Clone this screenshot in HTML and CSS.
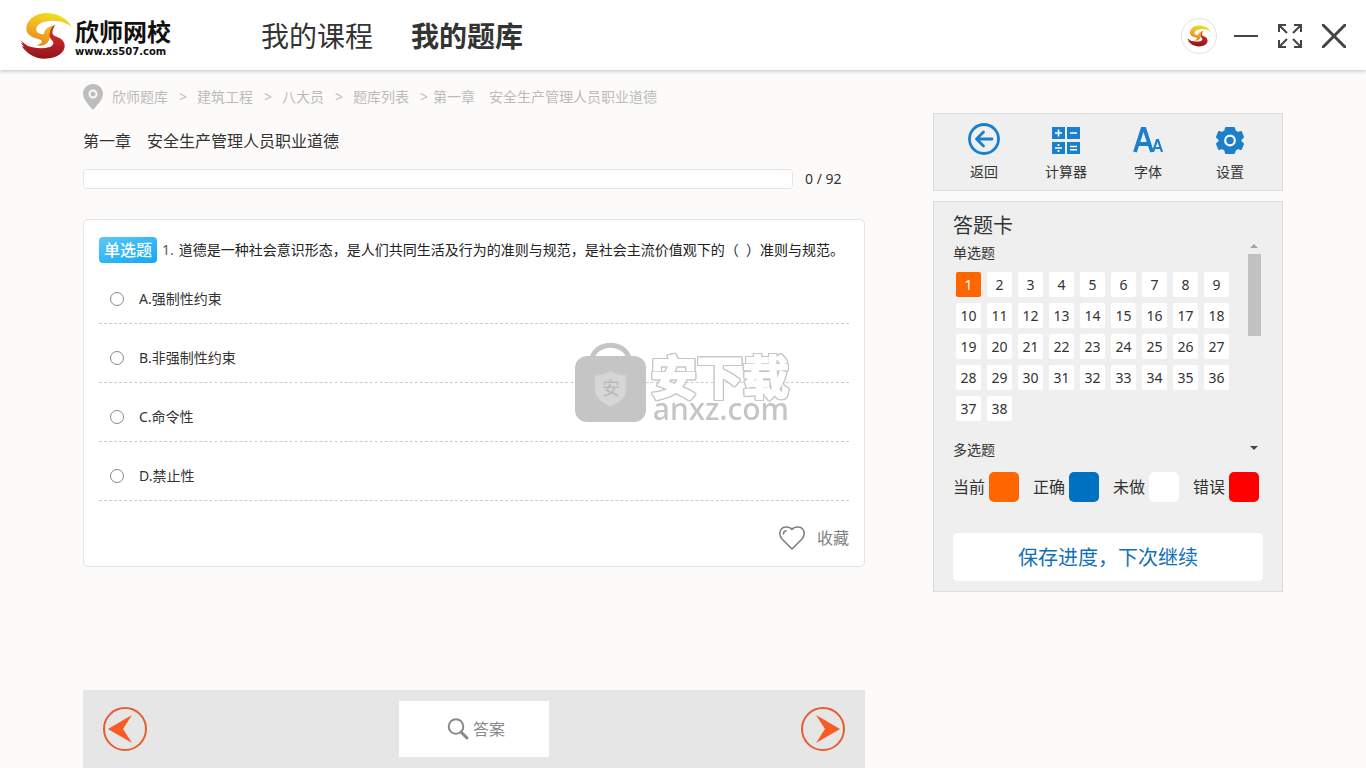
FILE: index.html
```html
<!DOCTYPE html>
<html lang="zh-CN">
<head>
<meta charset="utf-8">
<meta name="viewport" content="width=device-width, initial-scale=1">
<title>欣师网校 - 我的题库</title>
<link rel="stylesheet" href="styles.css">
</head>
<body>
<svg class="defs" width="0" height="0" aria-hidden="true">
  <defs>
    <linearGradient id="gold" x1="0.7" y1="0" x2="0.3" y2="1">
      <stop offset="0" stop-color="#efe31c"/>
      <stop offset="0.45" stop-color="#f2b824"/>
      <stop offset="1" stop-color="#e8861f"/>
    </linearGradient>
    <linearGradient id="crimson" x1="0" y1="0" x2="0" y2="1">
      <stop offset="0" stop-color="#c8451f"/>
      <stop offset="0.5" stop-color="#c0212a"/>
      <stop offset="1" stop-color="#8e1519"/>
    </linearGradient>
    <symbol id="swoosh" viewBox="0 0 156 144">
      <path fill="url(#crimson)" d="M105 40C93 42 86 50 86 62C85 74 92 80 98 87C103 95 98 103 86 106C66 111 40 108 22 101L1 85L9 95L2 92L12 104L5 102C20 124 42 140 74 140C112 139 136 122 134 99C132 82 116 76 104 72C95 68 95 58 105 40Z"/>
      <path fill="url(#gold)" d="M154 44C140 14 104 2 74 3C40 6 18 28 19 52C20 66 32 74 44 78C60 82 70 86 64 92C60 97 54 99 47 99C68 105 84 97 88 82C90 70 86 58 98 43C84 44 74 52 72 66C62 68 50 63 49 54C48 40 62 29 86 27C112 24 136 30 154 44Z"/>
    </symbol>
  </defs>
</svg>

<header class="topbar">
  <a class="brand" href="#">
    <svg class="brand-mark" aria-hidden="true"><use href="#swoosh"/></svg>
    <span class="brand-text">
      <span class="brand-name">欣师网校</span>
      <span class="brand-url">www.xs507.com</span>
    </span>
  </a>
  <nav class="main-nav">
    <a href="#">我的课程</a>
    <a class="active" href="#">我的题库</a>
  </nav>
  <div class="window-tools">
    <button class="avatar" type="button" aria-label="用户"><svg width="24" height="22"><use href="#swoosh"/></svg></button>
    <button type="button" aria-label="最小化"><svg width="24" height="24" viewBox="0 0 24 24"><path d="M0 12h24"/></svg></button>
    <button type="button" aria-label="全屏"><svg width="24" height="24" viewBox="0 0 24 24"><path d="M1 8V1h7M1 1l8 8M16 1h7v7M23 1l-8 8M1 16v7h7M1 23l8-8M23 16v7h-7M23 23l-8-8"/></svg></button>
    <button type="button" aria-label="关闭"><svg width="24" height="24" viewBox="0 0 24 24"><path class="thick" d="M1 1l22 22M23 1L1 23"/></svg></button>
  </div>
</header>

<div class="page">
  <main class="content">
    <nav class="breadcrumb">
      <svg width="20" height="26" viewBox="0 0 20 26" aria-hidden="true"><path fill="#bdbdbd" fill-rule="evenodd" d="M10 0C4.300 0 0 4.300 0 9.700C0 16 7 22 10 26C13 22 20 16 20 9.700C20 4.300 15.700 0 10 0ZM10 5.500a4.500 4.500 0 1 1 0 9a4.500 4.500 0 0 1 0-9ZM10 7.500a2.500 2.500 0 1 0 0 5a2.500 2.500 0 0 0 0-5Z"/></svg>
      <a href="#">欣师题库</a><span class="sep">&gt;</span><a href="#">建筑工程</a><span class="sep">&gt;</span><a href="#">八大员</a><span class="sep">&gt;</span><a href="#">题库列表</a><span class="sep last">&gt;</span><a href="#">第一章　安全生产管理人员职业道德</a>
    </nav>
    <h1 class="chapter">第一章　安全生产管理人员职业道德</h1>
    <div class="progress-row">
      <progress id="done" value="0" max="92"></progress>
      <label for="done">0 / 92</label>
    </div>

    <section class="question">
      <p class="stem"><span class="tag">单选题</span><span class="num">1.</span><span>道德是一种社会意识形态，是人们共同生活及行为的准则与规范，是社会主流价值观下的（&nbsp; ）准则与规范。</span></p>
      <label class="option"><input type="radio" name="answer" value="A"><span>A.强制性约束</span></label>
      <label class="option"><input type="radio" name="answer" value="B"><span>B.非强制性约束</span></label>
      <label class="option"><input type="radio" name="answer" value="C"><span>C.命令性</span></label>
      <label class="option"><input type="radio" name="answer" value="D"><span>D.禁止性</span></label>
      <button class="favorite" type="button">
        <svg width="26" height="24" viewBox="0 0 26 24" aria-hidden="true"><path fill="none" stroke="#808080" stroke-width="1.600" stroke-linejoin="round" stroke-linecap="round" d="M13 23L3 13C-1 8 1 1 7 1C10 1 12 2 13 3.500C14 2 16 1 19 1C25 1 27 8 23 13ZM4.500 8C4.500 6.500 5.500 5 7 4.800"/></svg>
        <span>收藏</span>
      </button>
      <div class="watermark" aria-hidden="true">
        <svg width="71" height="80" viewBox="0 0 71 80"><path fill="none" stroke="#c2c2c2" stroke-width="5" d="M17 16C22 -1 49 -1 54 16"/><rect y="14" width="71" height="66" rx="12" fill="#c2c2c2"/><path fill="#d4d4d4" stroke="#cccccc" d="M35.500 29C42 33 46 33 51 33V48C51 56 43 61 35.500 65C28 61 20 56 20 48V33C25 33 29 33 35.500 29Z"/><text class="shield-text" x="36" y="53" text-anchor="middle">安</text></svg>
        <div class="watermark-text"><span class="watermark-name">安下载</span><span class="watermark-url">anxz.com</span></div>
      </div>
    </section>

    <footer class="pager">
      <button class="round" type="button" aria-label="上一题"><svg width="44" height="44" viewBox="0 0 44 44"><circle cx="22" cy="22" r="21"/><path d="M5 22L29 8L20 22L29 36Z"/></svg></button>
      <button class="answer" type="button"><svg width="22" height="22" viewBox="0 0 22 22" aria-hidden="true"><circle cx="9" cy="8.500" r="7.300"/><path d="M14 14l6 6"/></svg><span>答案</span></button>
      <button class="round" type="button" aria-label="下一题"><svg width="44" height="44" viewBox="0 0 44 44"><circle cx="22" cy="22" r="21"/><path d="M39 22L15 8L24 22L15 36Z"/></svg></button>
    </footer>
  </main>

  <aside class="sidebar">
    <div class="toolbox">
      <button type="button"><svg width="32" height="32" viewBox="0 0 32 32"><circle cx="16" cy="16" r="14.500" fill="none" stroke="#1a80cc" stroke-width="2.800"/><path fill="none" stroke="#1a80cc" stroke-width="2.800" stroke-linecap="round" stroke-linejoin="round" d="M24 16H9M15.500 9L8.500 16L15.500 23"/></svg><span>返回</span></button>
      <button type="button"><svg width="32" height="32" viewBox="0 0 32 32"><path fill="#1a80cc" d="M2 4h13v12H2zM17 4h13v12H17zM2 19h13v12H2zM17 19h13v12H17z"/><path fill="none" stroke="#fff" stroke-width="1.600" d="M5 10h7M8.500 6.500v7M20 10h7M5 25h7M20 23.500h7M20 26.800h7"/><circle cx="8.500" cy="22" r="1.100" fill="#fff"/><circle cx="8.500" cy="28" r="1.100" fill="#fff"/></svg><span>计算器</span></button>
      <button type="button"><svg width="32" height="32" viewBox="0 0 32 32"><path fill="none" stroke="#1a80cc" stroke-width="3.800" d="M3 29L10.500 6H12.500L20 29M6 21H17"/><path fill="none" stroke="#1a80cc" stroke-width="2.200" d="M21 29L25 17H26L30 29M22.500 25H28.500"/></svg><span>字体</span></button>
      <button type="button"><svg width="32" height="32" viewBox="0 0 32 32"><path fill="#1a80cc" stroke="#1a80cc" stroke-width="2" stroke-linejoin="round" d="M12 5H20L21 8.500L24 10L27 9L29 14L26.500 16.500V18.500L29 21L27 26L24 25L21 26.500L20 30H12L11 26.500L8 25L5 26L3 21L5.500 18.500V16.500L3 14L5 9L8 10L11 8.500Z"/><circle cx="16" cy="17.500" r="4.800" fill="#1a80cc" stroke="#fff" stroke-width="2.200"/></svg><span>设置</span></button>
    </div>

    <section class="sheet">
      <h2>答题卡</h2>
      <div class="sheet-body">
        <div class="sheet-list">
          <h3>单选题</h3>
          <div class="numbers">
            <button class="current" type="button">1</button><button type="button">2</button><button type="button">3</button><button type="button">4</button><button type="button">5</button><button type="button">6</button><button type="button">7</button><button type="button">8</button><button type="button">9</button>
            <button type="button">10</button><button type="button">11</button><button type="button">12</button><button type="button">13</button><button type="button">14</button><button type="button">15</button><button type="button">16</button><button type="button">17</button><button type="button">18</button>
            <button type="button">19</button><button type="button">20</button><button type="button">21</button><button type="button">22</button><button type="button">23</button><button type="button">24</button><button type="button">25</button><button type="button">26</button><button type="button">27</button>
            <button type="button">28</button><button type="button">29</button><button type="button">30</button><button type="button">31</button><button type="button">32</button><button type="button">33</button><button type="button">34</button><button type="button">35</button><button type="button">36</button>
            <button type="button">37</button><button type="button">38</button>
          </div>
          <h3>多选题</h3>
        </div>
        <div class="scrollbar" aria-hidden="true"><span class="arrow up"></span><span class="thumb"></span><span class="arrow down"></span></div>
      </div>
      <ul class="legend">
        <li>当前<i class="now"></i></li>
        <li>正确<i class="right"></i></li>
        <li>未做<i class="todo"></i></li>
        <li>错误<i class="wrong"></i></li>
      </ul>
      <button class="save" type="button">保存进度，下次继续</button>
    </section>
  </aside>
</div>
</body>
</html>
```

FILE: styles.css
```css
* { box-sizing: border-box; }

body {
  margin: 0;
  min-height: 100vh;
  display: flex;
  flex-direction: column;
  background: #fcfbf9;
  color: #333;
  font: 14px/20px "Noto Sans", "Noto Sans CJK SC", sans-serif;
}

h1, h2, h3, p, ul { margin: 0; padding: 0; font-weight: 400; }
a { color: inherit; text-decoration: none; }
button { padding: 0; border: 0; background: none; color: inherit; font: inherit; cursor: pointer; }
svg { display: block; flex: none; }
.defs { position: absolute; }

/* Header */
.topbar {
  height: 70px;
  padding: 2px 20px 0;
  display: flex;
  align-items: center;
  background: #fff;
  box-shadow: 0 1px 4px rgba(0, 0, 0, 0.25);
}
.brand { display: flex; align-items: center; gap: 3px; color: #111; }
.brand-mark { width: 52px; height: 48px; }
.brand-text { display: flex; flex-direction: column; padding-top: 3px; }
.brand-name { font-size: 24px; line-height: 28px; font-weight: 700; }
.brand-url { font: 700 10px/12px "DejaVu Sans", sans-serif; }
.main-nav {
  margin-left: 90px;
  display: flex;
  gap: 38px;
  font-size: 28px;
  line-height: 40px;
}
.main-nav .active { font-weight: 600; }
.window-tools { margin-left: auto; display: flex; align-items: center; gap: 20px; }
.window-tools path { fill: none; stroke: #444; stroke-width: 2; }
.window-tools .thick { stroke-width: 3; stroke-linecap: round; }
.window-tools .avatar {
  width: 36px;
  height: 36px;
  margin-right: -3px;
  display: flex;
  align-items: center;
  justify-content: center;
  border: 1px solid #e2e2e2;
  border-radius: 50%;
}
.window-tools .avatar path { stroke: none; }

/* Page columns */
.page {
  flex: 1;
  width: 100%;
  max-width: 1200px;
  margin: 0 auto;
  display: flex;
  gap: 68px;
}
.content { flex: 1; min-width: 0; display: flex; flex-direction: column; }
.sidebar { width: 350px; padding-top: 43px; }

.breadcrumb { margin-top: 13px; height: 28px; display: flex; align-items: center; color: #bbb; }
.breadcrumb svg { margin-right: 9px; }
.sep { margin: 0 10px 0 11px; }
.sep.last { margin-right: 5px; }
.chapter { margin-top: 18px; font-size: 16px; line-height: 24px; }

.progress-row { margin-top: 16px; display: flex; align-items: center; gap: 12px; }
progress {
  appearance: none;
  flex: 1;
  height: 20px;
  border: 1px solid #e4e4e4;
  border-radius: 4px;
  background: #fff;
  overflow: hidden;
}
progress::-webkit-progress-bar { background: #fff; }
progress::-webkit-progress-value { background: #0070c0; }
.progress-row label { width: 60px; }

/* Question card */
.question {
  position: relative;
  margin-top: 30px;
  padding: 16px 15px 15px;
  display: flex;
  flex-direction: column;
  border: 1px solid #e4e4e4;
  border-radius: 5px;
  background: #fff;
}
.stem { margin-bottom: 1px; display: flex; align-items: center; gap: 5px; height: 28px; color: #222; }
.num { color: #555; }
.tag {
  padding: 0 5px;
  border-radius: 4px;
  background: linear-gradient(160deg, #5cc8f8, #10a8f4);
  color: #fff;
  font-size: 16px;
  line-height: 26px;
  font-weight: 500;
}
.option {
  height: 59px;
  padding: 10px 11px 0;
  display: flex;
  align-items: center;
  gap: 15px;
  border-bottom: 1px dashed #ccc;
}
.option input {
  appearance: none;
  width: 14px;
  height: 14px;
  margin: 0;
  border: 1px solid #888;
  border-radius: 50%;
  background: #fff;
}
.option input:checked { border: 4px solid #0070c0; }
.favorite {
  align-self: flex-end;
  margin-top: 24px;
  display: flex;
  align-items: center;
  gap: 12px;
  color: #808080;
  font-size: 16px;
  line-height: 26px;
}

.watermark {
  position: absolute;
  top: 122px;
  right: 75px;
  display: flex;
  gap: 5px;
  pointer-events: none;
  opacity: 0.95;
}
.watermark-text { display: flex; flex-direction: column; padding-top: 11px; }
.watermark-name {
  color: #fff;
  font-size: 46px;
  line-height: 46px;
  font-weight: 700;
  -webkit-text-stroke: 2px #fff;
  filter: drop-shadow(1px 0 0 #c2c2c2) drop-shadow(-1px 0 0 #c2c2c2) drop-shadow(0 1px 0 #c2c2c2) drop-shadow(0 -1px 0 #c2c2c2);
}
.watermark-url { padding-left: 2px; color: #c2c2c2; font-size: 30px; line-height: 20px; font-weight: 500; }
.shield-text { fill: #b8b8b8; font-size: 18px; font-weight: 500; }

/* Bottom bar */
.pager {
  margin-top: auto;
  height: 78px;
  padding: 0 20px;
  display: flex;
  align-items: center;
  justify-content: space-between;
  background: #e6e6e6;
}
.round circle { fill: none; stroke: #e85c30; stroke-width: 2; }
.round path { fill: #fa5a23; }
.answer {
  width: 150px;
  height: 56px;
  padding-left: 4px;
  display: flex;
  align-items: center;
  justify-content: center;
  gap: 4px;
  background: #fff;
  color: #888;
  font-size: 16px;
}
.answer circle { fill: none; stroke: #888; stroke-width: 2; }
.answer path { stroke: #888; stroke-width: 3; stroke-linecap: round; }

/* Sidebar tools */
.toolbox {
  height: 78px;
  padding: 0 10px;
  display: grid;
  grid-template-columns: repeat(4, 82px);
  justify-content: center;
  border: 1px solid #ddd;
  background: #efefef;
}
.toolbox button {
  padding-top: 9px;
  padding-right: 2px;
  display: flex;
  flex-direction: column;
  align-items: center;
  gap: 7px;
}

/* Answer sheet */
.sheet {
  margin-top: 10px;
  padding: 10px 19px;
  border: 1px solid #ddd;
  background: #efefef;
}
.sheet h2 { font-size: 20px; line-height: 28px; }
.sheet-body { height: 222px; display: flex; justify-content: space-between; }
.sheet-list { padding-top: 3px; overflow: hidden; }
.sheet h3 { font-size: 14px; line-height: 20px; }
.numbers {
  padding: 9px 3px 19px;
  display: grid;
  grid-template-columns: repeat(9, 25px);
  gap: 6px;
}
.numbers button { height: 25px; border-radius: 2px; background: #fff; }
.numbers .current { background: #f60; color: #fff; }
.scrollbar { width: 18px; padding: 4px 0 0; display: flex; flex-direction: column; align-items: center; }
.thumb { width: 13px; height: 82px; background: #c1c1c1; }
.arrow { border: 4px solid transparent; }
.arrow.up { margin-bottom: 6px; border-top: 0; border-bottom-color: #a3a3a3; }
.arrow.down { margin-top: auto; margin-bottom: 12px; border-bottom: 0; border-top-color: #444; }
.legend {
  margin-top: 10px;
  padding-right: 4px;
  display: flex;
  justify-content: space-between;
  list-style: none;
  font-size: 16px;
}
.legend li { display: flex; align-items: center; gap: 4px; line-height: 28px; }
.legend i { width: 30px; height: 30px; border-radius: 5px; }
.now { background: #f60; }
.right { background: #0070c0; }
.todo { background: #fff; }
.wrong { background: #f00; }
.save {
  width: 100%;
  height: 48px;
  margin-top: 31px;
  padding-top: 2px;
  border-radius: 5px;
  background: #fff;
  color: #1070b8;
  font-size: 20px;
}
```
